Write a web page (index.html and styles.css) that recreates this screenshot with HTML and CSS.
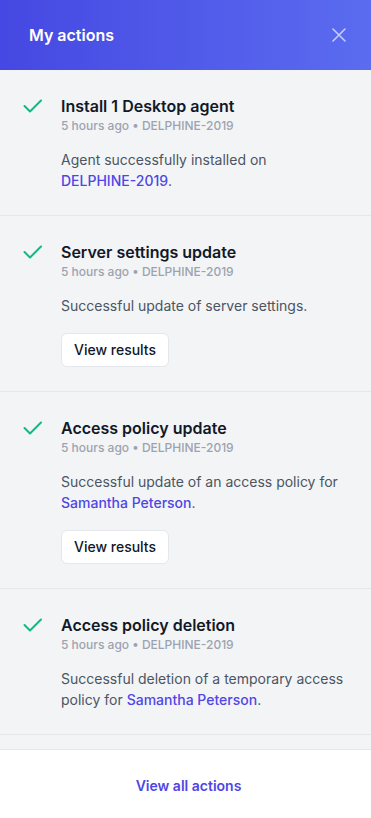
FILE: index.html
```html
<!DOCTYPE html>
<html lang="en">
<head>
  <meta charset="UTF-8" />
  <meta name="viewport" content="width=device-width, initial-scale=1.0" />
  <title>My actions</title>
  <link rel="stylesheet" href="styles.css">
</head>
<body>
  <div class="panel">
    <header class="panel-header">
      <h1>My actions</h1>
      <button class="close" aria-label="Close">
        <svg width="14" height="14" viewBox="0 0 14 14"><path d="M1 1l12 12M13 1L1 13" stroke="currentColor" stroke-width="1.6" stroke-linecap="round"/></svg>
      </button>
    </header>

    <ul class="actions">
      <li class="action">
        <svg class="check" width="20" height="20" viewBox="0 0 20 20"><polyline points="1.5,10 7,15.5 18,4.5" fill="none" stroke="currentColor" stroke-width="2" stroke-linecap="round" stroke-linejoin="round"/></svg>
        <div class="action-body">
          <div class="action-title">Install 1 Desktop agent</div>
          <div class="action-meta">5 hours ago • DELPHINE-2019</div>
          <p class="action-desc">Agent successfully installed on <a href="#">DELPHINE-2019</a>.</p>
        </div>
      </li>
      <li class="action">
        <svg class="check" width="20" height="20" viewBox="0 0 20 20"><polyline points="1.5,10 7,15.5 18,4.5" fill="none" stroke="currentColor" stroke-width="2" stroke-linecap="round" stroke-linejoin="round"/></svg>
        <div class="action-body">
          <div class="action-title">Server settings update</div>
          <div class="action-meta">5 hours ago • DELPHINE-2019</div>
          <p class="action-desc">Successful update of server settings.</p>
          <button class="btn">View results</button>
        </div>
      </li>
      <li class="action">
        <svg class="check" width="20" height="20" viewBox="0 0 20 20"><polyline points="1.5,10 7,15.5 18,4.5" fill="none" stroke="currentColor" stroke-width="2" stroke-linecap="round" stroke-linejoin="round"/></svg>
        <div class="action-body">
          <div class="action-title">Access policy update</div>
          <div class="action-meta">5 hours ago • DELPHINE-2019</div>
          <p class="action-desc">Successful update of an access policy for <a href="#">Samantha Peterson</a>.</p>
          <button class="btn">View results</button>
        </div>
      </li>
      <li class="action">
        <svg class="check" width="20" height="20" viewBox="0 0 20 20"><polyline points="1.5,10 7,15.5 18,4.5" fill="none" stroke="currentColor" stroke-width="2" stroke-linecap="round" stroke-linejoin="round"/></svg>
        <div class="action-body">
          <div class="action-title">Access policy deletion</div>
          <div class="action-meta">5 hours ago • DELPHINE-2019</div>
          <p class="action-desc">Successful deletion of a temporary access policy for <a href="#">Samantha Peterson</a>.</p>
        </div>
      </li>
    </ul>

    <footer class="panel-footer">
      <a href="#">View all actions</a>
    </footer>
  </div>
</body>
</html>
```

FILE: styles.css
```css
body {
  margin: 0;
  font-family: Inter, "Noto Sans", sans-serif;
  background: #ffffff;
}
.panel {
  height: 100vh;
  display: flex;
  flex-direction: column;
}
.panel-header {
  height: 70px;
  flex-shrink: 0;
  box-sizing: border-box;
  padding: 0 24px 0 29px;
  display: flex;
  align-items: center;
  justify-content: space-between;
  background: linear-gradient(to right, #4548e2, #5b6cf0);
}
.panel-header h1 {
  margin: 0;
  font-size: 16px;
  font-weight: 600;
  color: #ffffff;
}
.close {
  background: none;
  border: 0;
  padding: 0;
  color: #c7cdfa;
  display: flex;
  margin-right: 1px;
}
.actions {
  list-style: none;
  margin: 0;
  padding: 0;
  flex: 1;
  overflow: hidden;
  background: #f3f4f6;
}
.action {
  display: flex;
  gap: 18px;
  padding: 24px 24px 24px 23px;
  border-bottom: 1px solid #e5e7eb;
}
.check {
  color: #10b981;
  flex-shrink: 0;
  margin-top: 2px;
}
.action-title {
  font-size: 16px;
  line-height: 24px;
  font-weight: 600;
  color: #111827;
}
.action-meta {
  font-size: 12px;
  line-height: 16px;
  font-weight: 500;
  color: #9ca3af;
}
.action-desc {
  margin: 15px 0 0;
  font-size: 14px;
  line-height: 21px;
  color: #4b5563;
}
.action-desc a {
  color: #4f46e5;
  font-weight: 500;
  text-decoration: none;
  white-space: nowrap;
}
.btn {
  margin-top: 17px;
  padding: 6px 12px;
  font-family: inherit;
  font-size: 14px;
  line-height: 20px;
  font-weight: 500;
  color: #111827;
  background: #ffffff;
  border: 1px solid #e5e7eb;
  border-radius: 6px;
}
.panel-footer {
  height: 69px;
  flex-shrink: 0;
  box-sizing: border-box;
  padding: 4px 0 0 6px;
  border-top: 1px solid #e5e7eb;
  display: flex;
  align-items: center;
  justify-content: center;
  background: #ffffff;
}
.panel-footer a {
  font-size: 14px;
  line-height: 20px;
  font-weight: 600;
  color: #4f46e5;
  text-decoration: none;
}
```
